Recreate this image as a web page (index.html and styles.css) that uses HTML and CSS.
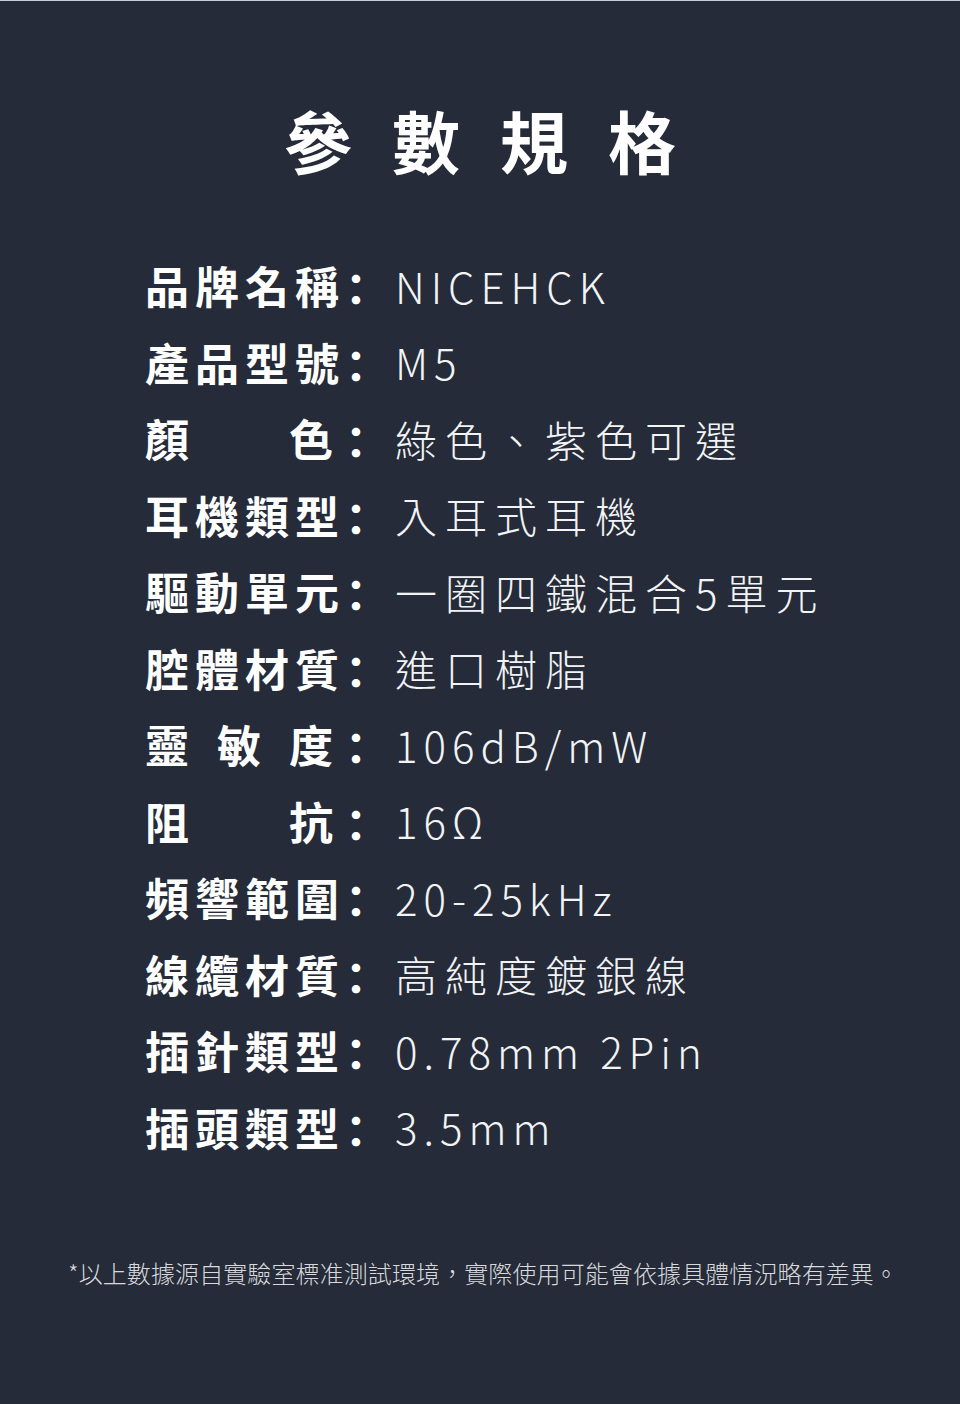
FILE: index.html
```html
<!DOCTYPE html>
<html lang="zh-Hant">
<head>
<meta charset="utf-8">
<title>參數規格</title>
<link rel="stylesheet" href="styles.css">
</head>
<body>
<main class="page">
  <h1 class="title">參數規格</h1>
  <ul class="specs">
    <li class="row"><span class="label">品牌名稱</span><span class="colon">：</span><span class="value"><span class="lat">NICEHCK</span></span></li>
    <li class="row"><span class="label">產品型號</span><span class="colon">：</span><span class="value"><span class="lat">M5</span></span></li>
    <li class="row"><span class="label">顏色</span><span class="colon">：</span><span class="value">綠色、紫色可選</span></li>
    <li class="row"><span class="label">耳機類型</span><span class="colon">：</span><span class="value">入耳式耳機</span></li>
    <li class="row"><span class="label">驅動單元</span><span class="colon">：</span><span class="value">一圈四鐵混合5單元</span></li>
    <li class="row"><span class="label">腔體材質</span><span class="colon">：</span><span class="value">進口樹脂</span></li>
    <li class="row"><span class="label">靈敏度</span><span class="colon">：</span><span class="value"><span class="lat">106dB/mW</span></span></li>
    <li class="row"><span class="label">阻抗</span><span class="colon">：</span><span class="value"><span class="lat">16Ω</span></span></li>
    <li class="row"><span class="label">頻響範圍</span><span class="colon">：</span><span class="value"><span class="lat">20-25kHz</span></span></li>
    <li class="row"><span class="label">線纜材質</span><span class="colon">：</span><span class="value">高純度鍍銀線</span></li>
    <li class="row"><span class="label">插針類型</span><span class="colon">：</span><span class="value"><span class="lat">0.78mm 2Pin</span></span></li>
    <li class="row"><span class="label">插頭類型</span><span class="colon">：</span><span class="value"><span class="lat">3.5mm</span></span></li>
  </ul>
  <p class="note">*以上數據源自實驗室標准測試環境，實際使用可能會依據具體情況略有差異。</p>
</main>
</body>
</html>
```

FILE: styles.css
```css
* { box-sizing: border-box; }
html, body {
  margin: 0;
  padding: 0;
  background: #252b38;
}
body {
  font-family: "Noto Sans CJK SC", "Noto Sans CJK TC", sans-serif;
  color: #ffffff;
}
.page {
  width: 960px;
  height: 1404px;
  border-top: 1px solid #c9ccd2;
  padding-top: 99px;
  overflow: hidden;
}
.title {
  margin: 0;
  height: 80px;
  line-height: 80px;
  text-align: center;
  font-size: 68px;
  font-weight: 700;
  letter-spacing: 40px;
  padding-left: 40px;
  color: #ffffff;
}
.specs {
  list-style: none;
  margin: 67px 0 0;
  padding: 0 0 0 145px;
}
.row {
  display: flex;
  align-items: center;
  height: 76.5px;
  white-space: nowrap;
}
.label {
  width: 194px;
  font-size: 44px;
  font-weight: 700;
  letter-spacing: 6px;
  text-align: justify;
  text-align-last: justify;
}
.colon {
  width: 56px;
  font-size: 44px;
  font-weight: 700;
  padding-left: 6px;
}
.value {
  font-size: 42px;
  font-weight: 200;
  letter-spacing: 8px;
  color: #f2f3f5;
}
.value .lat {
  letter-spacing: 6px;
}
.note {
  margin: 93px 0 0;
  padding-left: 6px;
  line-height: 30px;
  text-align: center;
  font-size: 24px;
  font-weight: 300;
  letter-spacing: 0.1px;
  color: #d8d9dc;
}
```
